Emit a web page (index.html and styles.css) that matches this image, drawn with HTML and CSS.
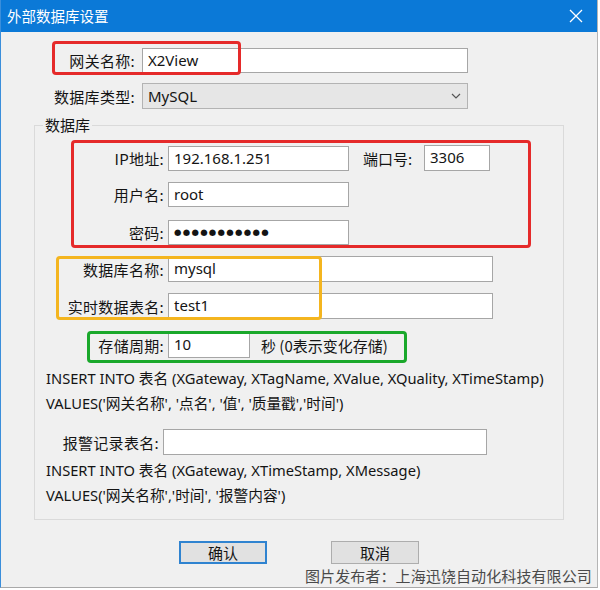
FILE: index.html
```html
<!DOCTYPE html>
<html lang="zh">
<head>
<meta charset="utf-8">
<title>外部数据库设置</title>
<link rel="stylesheet" href="styles.css">
</head>
<body>
<div class="window">
  <div class="titlebar">
    <span class="title">外部数据库设置</span>
    <svg class="close" width="14" height="14" viewBox="0 0 14 14"><path d="M1 1 L13 13 M13 1 L1 13" stroke="#fff" stroke-width="1.3" fill="none"/></svg>
  </div>
  <div class="content">
    <div class="row top-row">
      <span class="label top-label">网关名称:</span>
      <span class="input w-wide">X2View</span>
    </div>
    <div class="row top-row row-gap10">
      <span class="label top-label">数据库类型:</span>
      <span class="select w-wide">MySQL
        <svg class="chev" width="10" height="6" viewBox="0 0 10 6"><path d="M1 1 L5 5 L9 1" stroke="#555" stroke-width="1.2" fill="none"/></svg>
      </span>
    </div>
    <fieldset class="group">
      <legend class="legend">数据库</legend>
      <div class="row g-row first">
        <span class="label g-label">IP地址:</span>
        <span class="input w-ip">192.168.1.251</span>
        <span class="port-label">端口号:</span>
        <span class="input w-port">3306</span>
      </div>
      <div class="row g-row gap11">
        <span class="label g-label">用户名:</span>
        <span class="input w-ip">root</span>
      </div>
      <div class="row g-row gap13">
        <span class="label g-label">密码:</span>
        <span class="input w-ip dots">●●●●●●●●●●●</span>
      </div>
      <div class="row g-row gap11">
        <span class="label g-label">数据库名称:</span>
        <span class="input w-db">mysql</span>
      </div>
      <div class="row g-row gap11">
        <span class="label g-label">实时数据表名:</span>
        <span class="input w-db">test1</span>
      </div>
      <div class="row g-row gap14">
        <span class="label g-label">存储周期:</span>
        <span class="input w-period">10</span>
        <span class="unit">秒 (0表示变化存储)</span>
      </div>
      <p class="sql first-sql">INSERT INTO 表名 (XGateway, XTagName, XValue, XQuality, XTimeStamp)</p>
      <p class="sql">VALUES('网关名称', '点名', '值', '质量戳','时间')</p>
      <div class="row g-row alarm-row">
        <span class="label a-label">报警记录表名:</span>
        <span class="input w-alarm"></span>
      </div>
      <p class="sql">INSERT INTO 表名 (XGateway, XTimeStamp, XMessage)</p>
      <p class="sql">VALUES('网关名称','时间', '报警内容')</p>
    </fieldset>
    <div class="buttons">
      <span class="btn btn-default">确认</span>
      <span class="btn">取消</span>
    </div>
  </div>
  <div class="mark red1"></div>
  <div class="mark red2"></div>
  <div class="mark yellow"></div>
  <div class="mark green"></div>
  <div class="watermark">图片发布者：上海迅饶自动化科技有限公司</div>
</div>
</body>
</html>
```
FILE: styles.css
```css
html, body {
  margin: 0;
  padding: 0;
  background: #ffffff;
}
body {
  font-family: "Noto Sans", "Noto Sans CJK SC", sans-serif;
  font-size: 15px;
  color: #141414;
}
.window {
  position: relative;
  width: 596px;
  height: 587px;
  background: #f0f0f0;
  border-left: 1px solid #3a8edb;
  border-right: 1px solid #b5b5b5;
  border-bottom: 1px solid #a9a9a9;
  overflow: hidden;
}
.titlebar {
  height: 32px;
  background: #0b79d7;
  display: flex;
  align-items: center;
  justify-content: space-between;
  padding: 0 14px 0 6px;
}
.title {
  color: #ffffff;
  font-family: "Noto Sans CJK SC", sans-serif;
  font-size: 14.5px;
  line-height: 20px;
}
.close {
  display: block;
}
.content {
  padding-top: 16px;
}
.row {
  display: flex;
  align-items: center;
}
.row-gap10 { margin-top: 10px; }
.label {
  text-align: right;
  white-space: nowrap;
  font-family: "Noto Sans CJK SC", sans-serif;
  font-size: 15px;
  letter-spacing: 0.3px;
}
.top-label {
  width: 134px;
  margin-right: 7px;
}
.input, .select {
  box-sizing: border-box;
  height: 25px;
  background: #ffffff;
  border: 1px solid #a6a6a6;
  padding-left: 5px;
  line-height: 23px;
  font-size: 15px;
  white-space: nowrap;
}
.select {
  height: 26px;
  line-height: 24px;
  background: #e6e6e6;
  border-color: #b3b3b3;
  display: flex;
  justify-content: space-between;
  align-items: center;
  padding-right: 6px;
}
.chev { display: block; }
.w-wide { width: 326px; }
.group {
  margin: 6px 33px 0 33px;
  padding: 0 0 11px 0;
  border: 1px solid #dadada;
  min-width: 0;
}
.legend {
  margin-left: 8px;
  padding: 0 2px;
  font-family: "Noto Sans CJK SC", sans-serif;
  font-size: 15px;
  line-height: 20px;
}
.g-label {
  width: 129px;
  margin-right: 4px;
}
.a-label {
  width: 124px;
  margin-right: 4px;
}
.g-row.first { margin-top: 10px; }
.gap11 { margin-top: 11px; }
.gap13 { margin-top: 13px; }
.gap14 { margin-top: 13px; }
.w-ip { width: 181px; }
.w-port { width: 66px; height: 26px; }
.w-db { width: 325px; height: 26px; }
.w-period { width: 82px; height: 26px; }
.w-alarm { width: 324px; height: 26px; }
.port-label {
  margin-left: 14px;
  width: 61px;
  font-family: "Noto Sans CJK SC", sans-serif;
}
.unit {
  margin-left: 11px;
  font-family: "Noto Sans CJK SC", sans-serif;
}
.dots {
  font-family: "DejaVu Sans", sans-serif;
  font-size: 8.5px;
  letter-spacing: 1.3px;
  padding-left: 5px;
}
.sql {
  margin: 0 0 0 11px;
  line-height: 25px;
  font-size: 14.7px;
  white-space: nowrap;
}
.first-sql { margin-top: 8px; }
.alarm-row { margin-top: 13px; margin-bottom: 3px; }
.buttons {
  display: flex;
  gap: 64px;
  padding-left: 178px;
  margin-top: 21px;
}
.btn {
  box-sizing: border-box;
  width: 88px;
  height: 23px;
  background: #e1e1e1;
  border: 1px solid #adadad;
  text-align: center;
  line-height: 21px;
  font-family: "Noto Sans CJK SC", sans-serif;
  font-size: 15px;
}
.btn-default {
  border: 2px solid #2f83d0;
  line-height: 19px;
}
.mark {
  position: absolute;
  box-sizing: border-box;
  border: 3px solid #e52a2a;
  border-radius: 4px;
}
.red1 { left: 51px; top: 41px; width: 189px; height: 34px; }
.red2 { left: 70px; top: 140px; width: 460px; height: 108px; }
.yellow { left: 55px; top: 256px; width: 266px; height: 64px; border-color: #f4b51f; }
.green { left: 86px; top: 331px; width: 320px; height: 32px; border-color: #1aa82b; }
.watermark {
  position: absolute;
  left: 304px;
  top: 565px;
  font-family: "Noto Sans CJK SC", sans-serif;
  font-size: 15px;
  line-height: 21px;
  color: #4a4a4a;
  white-space: nowrap;
  letter-spacing: 0.1px;
}
```
